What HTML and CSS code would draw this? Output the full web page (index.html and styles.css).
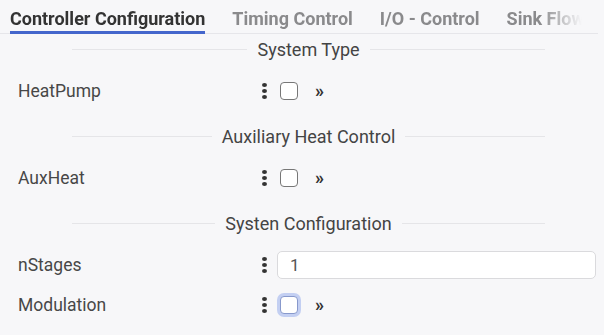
FILE: index.html
```html
<!DOCTYPE html>
<html lang="en">
<head>
	<meta charset="UTF-8">
	<title>Controller Configuration</title>
	<link rel="stylesheet" href="styles.css">
</head>
<body>
	<div class="tabs">
		<div class="tabs_list">
			<a href="javascript:;" class="tab current">Controller Configuration</a>
			<a href="javascript:;" class="tab">Timing Control</a>
			<a href="javascript:;" class="tab">I/O - Control</a>
			<a href="javascript:;" class="tab">Sink Flow</a>
		</div>
	</div>

	<div class="form">
		<div class="section_head"><span class="line"></span><span>System Type</span><span class="line"></span></div>
		<div class="row first">
			<div class="row_label">HeatPump</div>
			<div class="row_ctrl">
				<span class="kebab"><i></i><i></i><i></i></span>
				<span class="check"></span>
				<span class="more">&raquo;</span>
			</div>
		</div>

		<div class="section_head"><span class="line"></span><span>Auxiliary Heat Control</span><span class="line"></span></div>
		<div class="row first">
			<div class="row_label">AuxHeat</div>
			<div class="row_ctrl">
				<span class="kebab"><i></i><i></i><i></i></span>
				<span class="check"></span>
				<span class="more">&raquo;</span>
			</div>
		</div>

		<div class="section_head"><span class="line"></span><span>Systen Configuration</span><span class="line"></span></div>
		<div class="row first">
			<div class="row_label">nStages</div>
			<div class="row_ctrl">
				<span class="kebab"><i></i><i></i><i></i></span>
				<input class="field" type="text" value="1">
			</div>
		</div>
		<div class="row">
			<div class="row_label">Modulation</div>
			<div class="row_ctrl">
				<span class="kebab"><i></i><i></i><i></i></span>
				<span class="check focus"></span>
				<span class="more">&raquo;</span>
			</div>
		</div>
	</div>
</body>
</html>
```

FILE: styles.css
```css
body {
	margin: 0;
	padding: 0;
	background: #f7f7f9;
	font-family: Roboto, "Liberation Sans", sans-serif;
	color: #474747;
	width: 604px;
	height: 335px;
	overflow: hidden;
}

.tabs {
	width: 598px;
	height: 33px;
	border-bottom: 1px solid #e6e6ea;
}

.tabs_list {
	display: flex;
	padding-left: 10px;
	height: 34px;
	-webkit-mask-image: linear-gradient(to right, #000 540px, transparent 582px);
	mask-image: linear-gradient(to right, #000 540px, transparent 582px);
}

.tab {
	display: block;
	flex: none;
	height: 31px;
	line-height: 38px;
	margin-right: 27px;
	font-size: 18px;
	font-weight: bold;
	color: #8a8a8c;
	text-decoration: none;
	border-bottom: 3px solid transparent;
	white-space: nowrap;
}

.tab.current {
	color: #333;
	border-bottom-color: #4466cc;
}

.form { padding-top: 3px; }

.section_head {
	display: flex;
	align-items: center;
	gap: 10px;
	height: 24px;
	margin: 13px 59px 0 72px;
	font-size: 18px;
	color: #444;
	white-space: nowrap;
}

.form .section_head:first-child { margin-top: 0; }

.section_head .line {
	flex: 1;
	height: 1px;
	background: #e5e5e8;
}

.row {
	display: flex;
	align-items: center;
	height: 40px;
}

.row.first { margin-top: 10px; }

.row_label {
	width: 240px;
	padding-left: 18px;
	font-size: 17.5px;
}

.row_ctrl {
	display: flex;
	align-items: center;
	flex: 1;
	padding-left: 2px;
	padding-right: 8px;
}

.kebab {
	display: flex;
	flex-direction: column;
	justify-content: space-between;
	width: 5px;
	height: 16px;
	margin-left: 2px;
	margin-right: 13px;
}

.kebab i {
	display: block;
	width: 5px;
	height: 4px;
	border-radius: 50%;
	background: #333;
}

.check {
	display: block;
	box-sizing: border-box;
	width: 18px;
	height: 18px;
	border: 1px solid #777;
	border-radius: 4px;
	background: #fff;
}

.check.focus {
	border-color: #8899cc;
	box-shadow: 0 0 0 3px #c3cff2;
}

.more {
	margin-left: 17px;
	font-size: 18px;
	font-weight: bold;
	color: #333;
	line-height: 18px;
}

.field {
	flex: 1;
	box-sizing: border-box;
	height: 28px;
	margin-left: -3px;
	padding: 0 12px;
	border: 1px solid #dadadd;
	border-radius: 5px;
	background: #fff;
	font-family: Roboto, "Liberation Sans", sans-serif;
	font-size: 17px;
	color: #555;
	outline: none;
}
```
